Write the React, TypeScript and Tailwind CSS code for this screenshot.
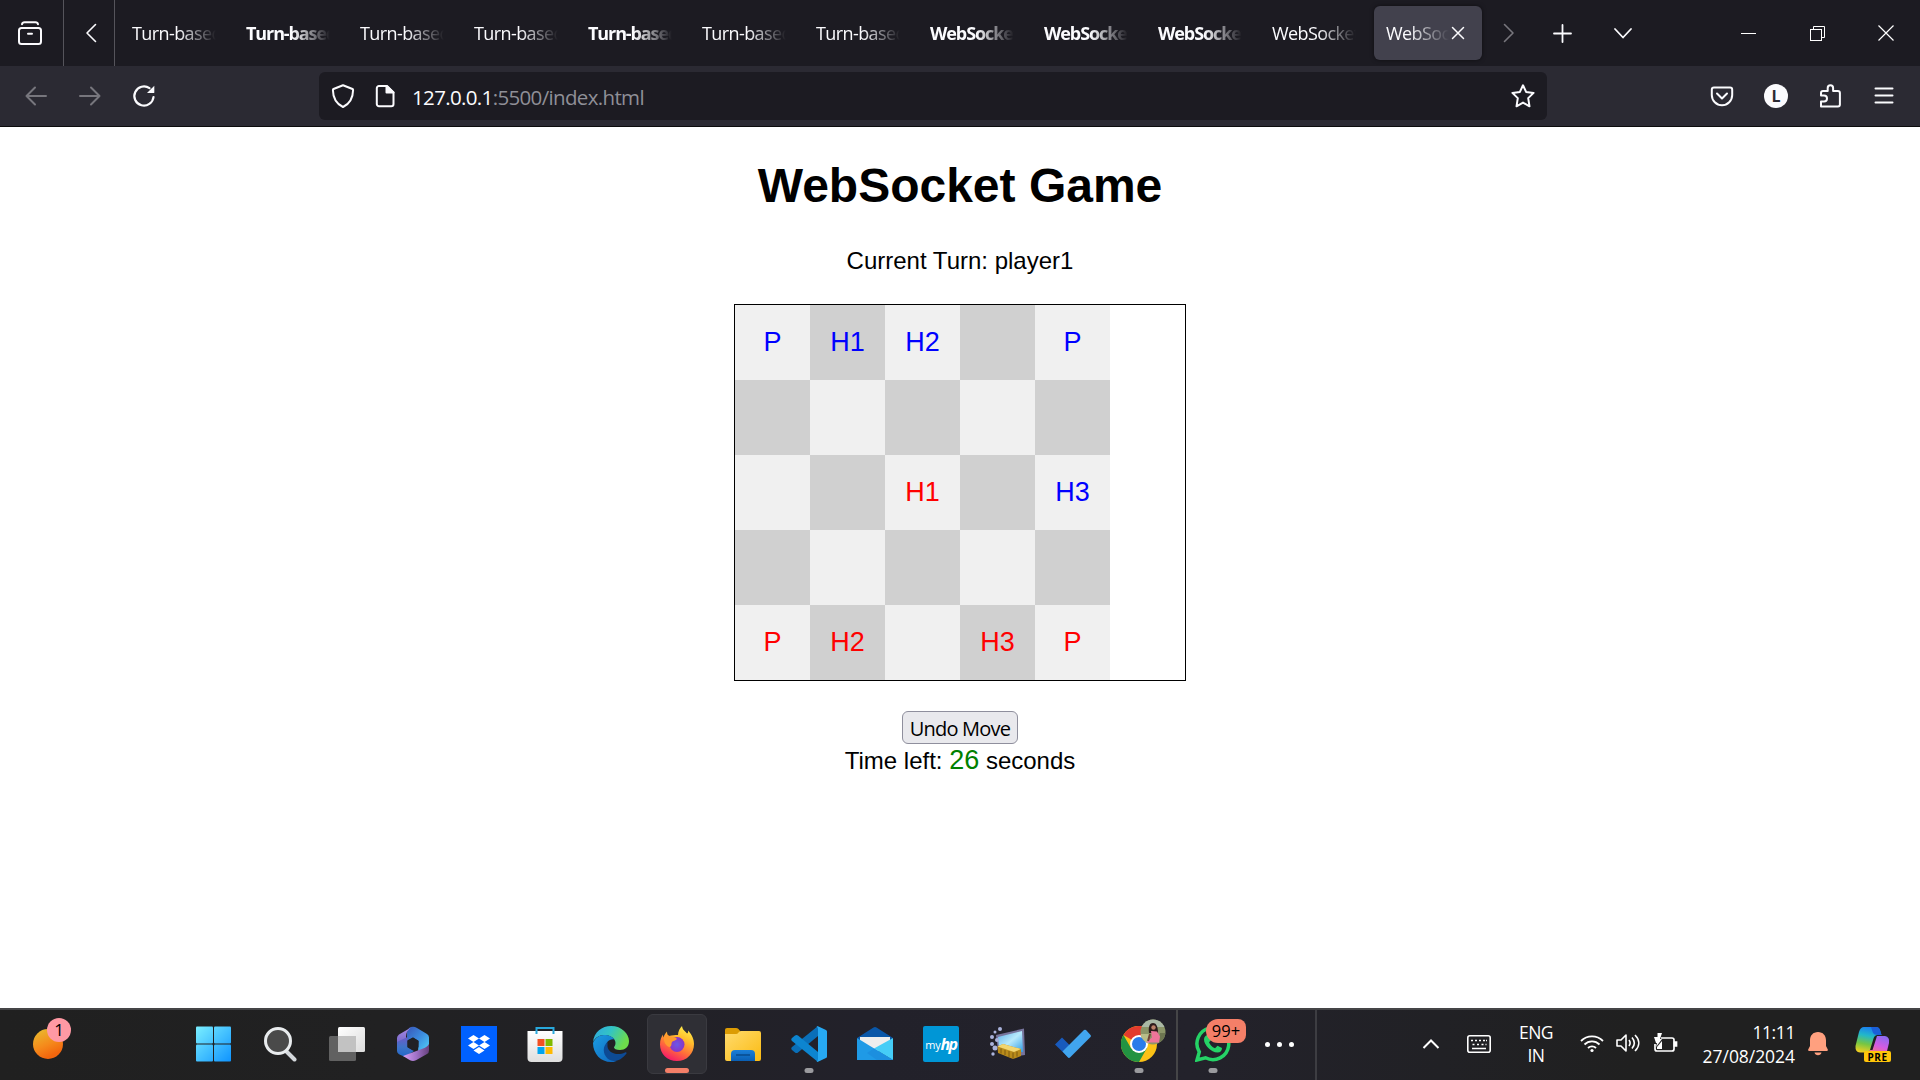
import React from "react";

type P = { children?: React.ReactNode };

const Ic = ({ children, s = 24 }: P & { s?: number }) => (
  <svg width={s} height={s} viewBox="0 0 24 24" fill="none" stroke="#fbfbfe" strokeWidth="2" strokeLinecap="round" strokeLinejoin="round">
    {children}
  </svg>
);

const Box = ({ w, children }: P & { w: string }) => (
  <div className={`${w} flex h-full shrink-0 items-center justify-center`}>{children}</div>
);

const tabs: [string, boolean][] = [
  ["Turn-based", false],
  ["Turn-based", true],
  ["Turn-based", false],
  ["Turn-based", false],
  ["Turn-based", true],
  ["Turn-based", false],
  ["Turn-based", false],
  ["WebSocket", true],
  ["WebSocket", true],
  ["WebSocket", true],
  ["WebSocket", false],
];

function TabBar() {
  return (
    <div className="flex h-[66px] items-center bg-[#1c1b22] text-[18px] tracking-[-0.6px] text-[#fbfbfe]">
      <Box w="w-[63px]">
        <svg className="mr-[3px]" width="24" height="24" viewBox="0 0 24 24" fill="none" stroke="#fbfbfe" strokeWidth="2" strokeLinecap="round">
          <rect x="1" y="7" width="22" height="16" rx="2.500" />
          <path d="M4 3.200C4.300 1.800 5.200 1.200 6.500 1.200h11c1.300 0 2.200.6 2.500 2M10 12.800h4" />
        </svg>
      </Box>
      <div className="h-full w-px bg-[#55545b]" />
      <Box w="w-[50px]">
        <div className="pl-[5px]">
          <Ic><path d="M15.500 3.500 7 12l8.500 8.500" strokeWidth="1.600" /></Ic>
        </div>
      </Box>
      <div className="mr-[2px] h-full w-px bg-[#55545b]" />
      {tabs.map(([t, bold], i) => (
        <div key={i} className="w-[114px] shrink-0 pl-[15px]">
          <div className={`w-[84px] overflow-hidden whitespace-nowrap [mask-image:linear-gradient(to_right,black_55%,transparent_100%)] ${bold ? "font-bold tracking-[-1.1px]" : ""}`}>{t}</div>
        </div>
      ))}
      <div className="mx-[3px] flex h-[54px] w-[108px] shrink-0 items-center rounded-[6px] bg-[#42414d] pl-[12px] shadow-[0_0_4px_rgba(0,0,0,0.5)]">
        <div className="w-[63px] overflow-hidden whitespace-nowrap [mask-image:linear-gradient(to_right,black_35%,transparent_100%)]">WebSocket</div>
        <svg className="ml-[2px]" width="14" height="14" viewBox="0 0 14 14" stroke="#fbfbfe" strokeWidth="1.500" strokeLinecap="round">
          <path d="M1.500 1.500l11 11M12.500 1.500l-11 11" />
        </svg>
      </div>
      <Box w="w-[48px]">
        <div className="pr-[2px]">
          <Ic><path d="M8.500 3.500 17 12l-8.500 8.500" stroke="#77767d" strokeWidth="1.600" /></Ic>
        </div>
      </Box>
      <Box w="w-[58px]">
        <Ic><path d="M12.500 4v17M4 12.500h17" strokeWidth="1.800" /></Ic>
      </Box>
      <Box w="w-[64px]">
        <Ic><path d="M4 8l8 8.500L20 8" strokeWidth="1.800" /></Ic>
      </Box>
      <div className="flex-1" />
      <Box w="w-[69px]"><div className="h-px w-[15px] bg-white" /></Box>
      <Box w="w-[69px]">
        <svg width="15" height="15" viewBox="0 0 15 15" fill="none" stroke="#fff">
          <rect x=".5" y="3.500" width="11" height="11" />
          <path d="M3.500 3.500v-3h11v11h-3" />
        </svg>
      </Box>
      <Box w="w-[68px]">
        <svg width="16" height="16" viewBox="0 0 16 16" stroke="#fff" strokeWidth="1.200"><path d="M.5.5l15 15M15.500.5l-15 15" /></svg>
      </Box>
    </div>
  );
}

function Toolbar() {
  return (
    <div className="flex h-[61px] items-center border-b border-[#0c0c0d] bg-[#2b2a33] px-[9px]">
      <Box w="w-[54px]"><Ic><path d="M22 12H2.500M11 3.500 2.500 12l8.500 8.500" stroke="#77767d" /></Ic></Box>
      <Box w="w-[54px]"><Ic><path d="M2 12h19.500M13 3.500l8.500 8.500-8.500 8.500" stroke="#77767d" /></Ic></Box>
      <Box w="w-[54px]">
        <Ic>
          <path d="M21.500 13A9.600 9.600 0 1 1 17.500 4.200" strokeWidth="2.200" />
          <path d="M22.300 1.800V8.500a.6.6 0 0 1-.6.6H15z" fill="#fbfbfe" stroke="none" />
        </Ic>
      </Box>
      <div className="ml-[148px] flex h-[48px] w-[1228px] items-center rounded-[6px] bg-[#1c1b22]">
        <Box w="w-[48px]">
          <Ic><path d="M12 1.200 21.500 5c.4.200.6.500.6.900C22 13.500 19 19.500 12 23 5 19.500 2 13.500 1.900 5.900c0-.4.200-.7.600-.9z" /></Ic>
        </Box>
        <Box w="w-[36px]">
          <Ic>
            <path d="M6 2h8l6.500 6.500V20a2.200 2.200 0 0 1-2.200 2.200H6A2.200 2.200 0 0 1 3.800 20V4.200A2.200 2.200 0 0 1 6 2z" />
            <path d="M13.500 2v6.500h7z" fill="#fbfbfe" />
          </Ic>
        </Box>
        <div className="flex-1 pl-[9px] pt-[2px] text-[20.500px] tracking-[-0.650px] text-[#8f8f97]">
          <span className="text-[#fbfbfe]">127.0.0.1</span>:5500/index.html
        </div>
        <Box w="w-[48px]">
          <Ic><path d="M12 1.300l3.100 6.600 7.500 1-5.400 5.200 1.300 8.200-6.500-3.700-6.500 3.700 1.300-8.200L1.400 8.900l7.500-1z" /></Ic>
        </Box>
      </div>
      <div className="flex-1" />
      <Box w="w-[54px]">
        <Ic><path d="M4 3.500h16a2.200 2.200 0 0 1 2.200 2.200V11a10.200 10.200 0 0 1-20.400 0V5.700A2.200 2.200 0 0 1 4 3.500zM7 9.500l5 5 5-5" /></Ic>
      </Box>
      <Box w="w-[54px]">
        <div className="flex h-6 w-6 items-center justify-center rounded-full bg-[#fbfbfe] text-[16px] font-bold text-[#2b2a33]">L</div>
      </Box>
      <Box w="w-[54px]">
        <Ic>
          <path d="M3 22.500V17.500H6a3 3 0 0 0 0-6H3V9a2 2 0 0 1 2-2H9.700V4a2.700 2.700 0 0 1 5.400 0v3h4.800a2 2 0 0 1 2 2v11.500a2 2 0 0 1-2 2z" />
        </Ic>
      </Box>
      <Box w="w-[54px]"><Ic><path d="M3.500 4.500h17M3.500 11.500h17M3.500 18.500h17" /></Ic></Box>
    </div>
  );
}

const board = [
  ["bP", "bH1", "bH2", "", "bP"],
  ["", "", "", "", ""],
  ["", "", "rH1", "", "bH3"],
  ["", "", "", "", ""],
  ["rP", "rH2", "", "rH3", "rP"],
];

function Game() {
  return (
    <div className="flex h-[881px] flex-col items-center bg-white font-['Liberation_Sans',Arial,sans-serif] text-[24px] leading-[28px] text-black">
      <h1 className="mt-[32px] text-[48px] font-bold leading-[54px]">WebSocket Game</h1>
      <p className="mt-[34px]">Current Turn: player1</p>
      <div className="mt-[29px] w-[452px] border border-black">
        {board.map((row, r) => (
          <div key={r} className="flex h-[75px]">
            {row.map((c, i) => (
              <div
                key={i}
                className={`flex w-[75px] items-center justify-center pb-px text-[27px] ${(r + i) % 2 ? "bg-[#d0d0d0]" : "bg-[#f0f0f0]"} ${c[0] === "b" ? "text-[#0000ff]" : "text-[#ff0000]"}`}
              >
                {c.slice(1)}
              </div>
            ))}
          </div>
        ))}
      </div>
      <button className="mt-[30px] flex h-[33px] w-[116px] items-center justify-center whitespace-nowrap rounded-[6px] border border-[#8f8f9d] bg-[#e9e9ed] pt-[2px] font-['Open_Sans',sans-serif] text-[20px] tracking-[-0.8px]">
        Undo Move
      </button>
      <div className="mt-[2px] whitespace-pre">
        Time left: <span className="text-[27px] text-[#008000]">26</span> seconds
      </div>
    </div>
  );
}

const App36 = ({ children }: P) => (
  <svg width="36" height="36" viewBox="0 0 36 36">{children}</svg>
);

const Slot = ({ children, dot, active }: P & { dot?: boolean; active?: boolean }) => (
  <div className={`relative flex h-[60px] shrink-0 items-center justify-center ${active ? "mx-[3px] w-[60px] rounded-[6px] border border-[#3a3a40] bg-[#2f2f35]" : "w-[66px]"}`}>
    {children}
    {dot && <div className="absolute bottom-[1px] left-1/2 h-[5px] w-[9px] -translate-x-1/2 rounded-full bg-[#9a9a9e]" />}
    {active && <div className="absolute bottom-0 left-1/2 h-[5px] w-[24px] -translate-x-1/2 rounded-full bg-[#f47f68]" />}
  </div>
);

const G = ({ id, c, v = "0 0 1 1" }: { id: string; c: string[]; v?: string }) => {
  const [x1, y1, x2, y2] = v.split(" ");
  return (
    <linearGradient id={id} x1={x1} y1={y1} x2={x2} y2={y2}>
      {c.map((k, i) => <stop key={i} offset={i / (c.length - 1)} stopColor={k} />)}
    </linearGradient>
  );
};

function Taskbar() {
  return (
    <div className="flex h-[72px] items-center border-t-2 border-[#454547] bg-[linear-gradient(90deg,#202020_0%,#212122_20%,#22212a_45%,#23222b_62%,#212125_75%,#202020_85%)] text-[17.5px] text-white">
      <div className="relative mb-[2px] h-[60px] w-[180px] shrink-0">
        <div className="absolute left-[33px] top-[15px] h-[30px] w-[30px] rounded-full bg-[linear-gradient(155deg,#eab52c_10%,#f58a1b_50%,#f2660d_80%)]" />
        <div className="absolute left-[47px] top-[4px] flex h-[24px] w-[24px] items-center justify-center rounded-full bg-[#ff99a4] text-[17px] text-black">1</div>
      </div>
      <div className="mb-[2px] flex items-center">
        <Slot>
          <App36>
            <defs><linearGradient id="win" gradientUnits="userSpaceOnUse" x1="0" y1="0" x2="36" y2="36"><stop stopColor="#7df1ff" /><stop offset="1" stopColor="#0e93ff" /></linearGradient></defs>
            <g fill="url(#win)"><rect x="1" y=".5" width="17" height="17" rx="1" /><rect x="19" y=".5" width="17" height="17" rx="1" /><rect x="1" y="18.500" width="17" height="17" rx="1" /><rect x="19" y="18.500" width="17" height="17" rx="1" /></g>
          </App36>
        </Slot>
        <Slot>
          <App36>
            <path d="M25 25l8.500 8.500" stroke="#d4d8dc" strokeWidth="4" strokeLinecap="round" />
            <circle cx="17" cy="15" r="12.500" fill="#4a4a4a" stroke="#e9ecee" strokeWidth="3" />
          </App36>
        </Slot>
        <div className="w-[2px]" />
        <Slot>
          <App36>
            <defs><G id="tv" c={["#ffffff", "#dcdcdc"]} /></defs>
            <rect x="9" y="1" width="27" height="25" rx="1.500" fill="url(#tv)" />
            <rect x="0" y="10" width="27" height="25" rx="1.500" fill="#777" fillOpacity=".75" />
            <path d="M9 10h18v16H9z" fill="#c2c2c2" />
          </App36>
        </Slot>
        <Slot>
          <App36>
            <defs><G id="m1" c={["#6c5ac8", "#3f74c9", "#2168c8"]} v="0 0 0 1" /><G id="m2" c={["#3856b8", "#3c8de0", "#55d5fa"]} /><G id="m3" c={["#d9a1f4", "#a273c9", "#66407c"]} v="0 0 1 0" /><G id="m4" c={["#a98ae6", "#5a55b8"]} v="0 0 0 1" /></defs>
            <path d="M14 2q4-2.500 8 0l10 6q2 1.300 2 3.500V22q0 2-2 3l-9 2 .5-12-5.500-3.500-6 3V6z" fill="url(#m2)" />
            <path d="M16 1.500 4 8.500Q2 10 2 12v13l9-4V11q0-6 5-9.500z" fill="url(#m4)" />
            <path d="M2 16v9q0 2 2 3.200L10 31l9-6-6.500-4V11L6 14z" fill="url(#m1)" />
            <path d="M8 30l7 4.300q3 1.500 6 0l11-6.300q2-1 2-3.500V18q-1 2-4 3.800z" fill="url(#m3)" />
            <path d="M18 11.500l5.500 3.200v6.600L18 24.500l-5.500-3.200v-6.600z" fill="#212125" />
          </App36>
        </Slot>
        <Slot>
          <App36>
            <rect width="36" height="36" fill="#0061ff" />
            <path d="M12.500 9l5.500 3.500-5.500 3.500L7 12.500zM23.500 9l5.500 3.500-5.500 3.500-5.500-3.500zM12.500 16l5.500 3.500-5.500 3.500L7 19.500zM23.500 16l5.500 3.500-5.500 3.500-5.500-3.500zM18 21l5.500 3.500L18 28l-5.500-3.500z" fill="#fff" />
          </App36>
        </Slot>
        <Slot>
          <App36>
            <defs><G id="st" c={["#ffffff", "#dedede"]} v="0 0 0 1" /></defs>
            <path d="M.5 5h35v27a4 4 0 0 1-4 4h-27a4 4 0 0 1-4-4z" fill="url(#st)" />
            <path d="M9.500 8V2h17v6" fill="none" stroke="#28a8dc" strokeWidth="2" />
            <path d="M10.500 13h7v7h-7z" fill="#f25022" /><path d="M18.500 13h7v7h-7z" fill="#7fba00" /><path d="M10.500 21h7v7h-7z" fill="#00a4ef" /><path d="M18.500 21h7v7h-7z" fill="#ffb900" />
          </App36>
        </Slot>
        <Slot>
          <App36>
            <defs><G id="e1" c={["#2ea6e4", "#33c4c4", "#6ddc4b"]} v="0 0 1 .4" /><G id="e2" c={["#1b9de2", "#0f66bd"]} v="0 0 1 1" /></defs>
            <path d="M0 16C1 6 9 0 18 0c11 0 18 8 18 15 0 6-4 9-9 9-4 0-6-1.500-6-2.500 0-1 1.500-1.500 1.500-4.500C22.500 12 17 9 11 9 6 9 2 12 0 16z" fill="url(#e1)" />
            <path d="M0 17c2-5 6-8 11-8 5 0 9 2 10.500 4.500C16 12.500 12.500 17 12.500 22c0 7 5 12 11 13-2 1-4 1-5.500 1C8 36 0 28 0 17z" fill="url(#e2)" />
            <path d="M14.500 16c-5 4-5 12 0 16.500 5 4.500 13 3 19-5 .5-1-.5-1.500-1.500-1-8 4-17 0-17.500-6z" fill="#0d4a94" />
          </App36>
        </Slot>
        <Slot active>
          <App36>
            <defs><G id="f1" c={["#fff34f", "#ffbe2c", "#ff6c3a", "#f5156c"]} v=".8 0 .3 1" /><radialGradient id="f2"><stop stopColor="#6a58e8" /><stop offset="1" stopColor="#8a35c5" /></radialGradient></defs>
            <path d="M19 9c0-4 2-7 4-9 .5 4 3 5 5 7.500 1.500-.5 1 -2 1-3C33.500 9 35 14 35 18c0 9.500-7 17-17 17S1 27.500 1 18.500c0-5 1.500-8 3-10 0 0 0 2 .5 3 1-3 2-4.500 3.500-6 0 2 .5 3.500 2 4.500C13 9 16 9 19 9z" fill="url(#f1)" />
            <circle cx="18" cy="18.500" r="7.500" fill="url(#f2)" />
            <path d="M5 10c3-1 6-.5 8 1.500 2-.5 4 0 5 1.500-1.500 2-4 1.500-5 3-1 2 0 4-2 5-4 0-7-6-6-11z" fill="#ff9a2e" />
          </App36>
        </Slot>
        <Slot>
          <App36>
            <defs><G id="fo" c={["#ffdb6e", "#fbbb12"]} /><G id="fb" c={["#1a7fd8", "#0a5fb4"]} v="0 0 0 1" /></defs>
            <path d="M0 4q0-2 2-2h9q1.500 0 2.500 1L16 6l-4 4H0z" fill="#dc9c04" />
            <path d="M0 8h11q1.500 0 2.500-1.500T16 5h18q2 0 2 2v26q0 2-2 2H2q-2 0-2-2z" fill="url(#fo)" />
            <path d="M6 35V28q0-4 4-4h16q4 0 4 4v7z" fill="url(#fb)" /><path d="M11 29h14" stroke="#084b8c" strokeWidth="1.500" />
          </App36>
        </Slot>
        <Slot dot>
          <App36>
            <path d="M27 0v10L7 26.500q-1.500 1-3 0L1 24q-1.500-1.500 0-3z" fill="#0a6fb8" />
            <path d="M27 36V26L7 9.500q-1.500-1-3 0L1 12q-1.500 1.500 0 3z" fill="#0d85d0" />
            <path d="M25.500.5q1-.7 2 0L35 4q1 .5 1 1.500v25q0 1-1 1.500l-7.500 3.500q-1 .5-2 0Q27 35 27 33V3q0-2-1.500-2.500z" fill="#27a9f2" />
          </App36>
        </Slot>
        <Slot>
          <App36>
            <path d="M0 12 16.500 1.500q1.500-1 3 0L36 12 18 24z" fill="#0a57a8" />
            <path d="M3 11h30v8L18 27 3 17z" fill="#eeeeee" />
            <path d="M0 12l36 22H0z" fill="#1f9ae6" /><path d="M36 12v22L17 22.500z" fill="#45cdf7" /><path d="M17 22.500 36 34H20L10 27z" fill="#1c8fdf" />
          </App36>
        </Slot>
        <Slot>
          <div className="flex h-9 w-9 items-center justify-center rounded-[2px] bg-[#0096d6] text-[11px] leading-none tracking-[-0.3px] text-white">
            <span>my</span><span className="text-[16px] font-bold italic tracking-[-1.5px]">hp</span>
          </div>
        </Slot>
        <Slot>
          <App36>
            <defs><G id="pc" c={["#5fb0ea", "#b8e9fb", "#2f9de6"]} /></defs>
            <path d="M7 9 35 2.500 36 29 22 31 9 24z" fill="#77749c" />
            <path d="M9 11 33 5 34 26l-14-1-10-3z" fill="url(#pc)" />
            <g fill="#aab3dc"><circle cx="3" cy="11" r="2" /><circle cx="11" cy="3" r="2" /><circle cx="6" cy="6" r="1.500" /><circle cx="3" cy="18" r="2" /><circle cx="6" cy="22" r="2.500" /><circle cx="4" cy="28" r="1.700" /><circle cx="8" cy="14" r="2" /></g>
            <path d="M8.500 20.500 14 18l18 5v7l-8 3-15-6z" fill="#b98b1b" /><path d="M8.500 20.500 14 18l18 5-7 3z" fill="#f2d670" />
            <path d="M12 22.500v5M16 24v5M20 25v6M24 26.500v6M28 25.500v5" stroke="#7d5a10" />
          </App36>
        </Slot>
        <Slot>
          <App36>
            <path d="M0 18.500 7 11.500 16.500 21 14 32z" fill="#185abd" />
            <path d="M7.500 25.500 29 4q1-.7 2 0l4.500 5q.8 1 0 2L15 31.500q-1 .8-2 0z" fill="#41a5ee" />
          </App36>
        </Slot>
        <Slot dot>
          <App36>
            <circle cx="18" cy="18" r="18" fill="#fbc116" />
            <path d="M18 18 2.400 9A18 18 0 0 1 33.600 9z" fill="#e33b2e" />
            <path d="M2.400 9A18 18 0 0 0 18 36l8-14H18L10.200 22.500z" fill="#229342" />
            <circle cx="18" cy="18" r="9" fill="#fff" /><circle cx="18" cy="18" r="7" fill="#2a7bea" />
          </App36>
          <svg className="absolute left-[34px] top-[5px]" width="26" height="26" viewBox="0 0 26 26">
            <defs><clipPath id="av"><circle cx="13" cy="13" r="12.500" /></clipPath></defs>
            <g clipPath="url(#av)">
              <path d="M0 0h26v26H0z" fill="#8b9568" /><path d="M0 0h26v8H0z" fill="#aab8a5" /><path d="M0 15h9v11H0z" fill="#b8bd88" /><path d="M20 14h6v9h-7z" fill="#6c7550" />
              <path d="M9 14c-1-7 1-10 4-10s5 3 5 10z" fill="#2d1b1b" /><circle cx="13.500" cy="8.500" r="2.200" fill="#bd8068" />
              <path d="M11 12l6 .5 3 5-1 6H6l6-5z" fill="#ee7599" /><path d="M10 15l-2 7" stroke="#704434" strokeWidth="2" />
            </g>
          </svg>
        </Slot>
      </div>
      <div className="ml-[4px] h-full w-[2px] shrink-0 bg-[#454547]" />
      <div className="mb-[2px] ml-[2px] flex items-center">
        <Slot dot>
          <App36>
            <path d="M2 34 4.300 26A15.900 15.900 0 1 1 10.500 31.800z" fill="none" stroke="#25d366" strokeWidth="3.500" />
            <path d="M12.500 9c-2 .3-3.500 2-3.500 4.500C9 19 16 26.500 22.500 26.500c3 0 4.500-2 4.500-4.500l-4.500-2.300-2.500 2.500c-3-1.200-5-3.500-6-6l2-2z" fill="#25d366" />
          </App36>
          <div className="absolute left-[26px] top-[5px] flex h-[24px] w-[40px] items-center justify-center rounded-l-[12px] rounded-r-[8px] bg-[#f47f68] text-[16.500px] text-black">99+</div>
        </Slot>
        <Slot>
          <div className="flex gap-[7px]"><i className="h-[5px] w-[5px] rounded-full bg-white" /><i className="h-[5px] w-[5px] rounded-full bg-white" /><i className="h-[5px] w-[5px] rounded-full bg-white" /></div>
        </Slot>
      </div>
      <div className="ml-[3px] h-full w-[2px] shrink-0 bg-[#3d3d42]" />
      <div className="flex-1" />
      <div className="mb-[2px] flex h-[60px] items-center">
        <Box w="w-[36px]">
          <svg width="18" height="12" viewBox="0 0 18 12" fill="none" stroke="#fff" strokeWidth="2"><path d="M1.500 10 9 2.500l7.500 7.500" /></svg>
        </Box>
        <Box w="w-[60px]">
          <svg width="24" height="18" viewBox="0 0 24 18" fill="none" stroke="#fff" strokeWidth="1.600">
            <rect x=".8" y=".8" width="22.400" height="16.400" rx="2" />
            <path d="M4 5.500h2M8 5.500h2M12 5.500h2M16 5.500h2M5.500 9.500h2M10 9.500h2M14.500 9.500h2M5 13.500h14M19 5.500h1M18.500 9.500h1" />
          </svg>
        </Box>
        <div className="flex w-[54px] flex-col items-center text-[17.500px] leading-[23px] tracking-[-0.5px]"><span>ENG</span><span>IN</span></div>
        <div className="flex w-[120px] justify-center gap-[12px] pl-[12px]">
          <svg width="24" height="20" viewBox="0 0 24 20" fill="none" stroke="#fff" strokeWidth="1.800">
            <path d="M1 8a15.600 15.600 0 0 1 22 0M4.500 11.500a10.600 10.600 0 0 1 15 0M8 15a5.700 5.700 0 0 1 8 0" /><circle cx="12" cy="17.500" r="1.600" fill="#fff" stroke="none" />
          </svg>
          <svg width="25" height="20" viewBox="0 0 25 20" fill="none" stroke="#fff" strokeWidth="1.600" strokeLinejoin="round">
            <path d="M1 7h4l5-5v16l-5-5H1zM13 7c1.500 2 1.500 4 0 6M16 4.500c3 3.500 3 7.500 0 11M19 2c5 5 5 11 0 16" />
          </svg>
          <svg width="25" height="22" viewBox="0 0 25 22" fill="none" stroke="#fff" strokeWidth="1.700">
            <path d="M8 5h11q2 0 2 2v9q0 2-2 2H4q-2 0-2-2v-5" /><path d="M21.500 9h2v4h-2z" fill="#fff" />
            <path d="M4.500 0v4H1l2 6h1l-1 4 6-8H7l2-6z" fill="#fff" stroke="none" /><path d="M4 16V14L9 8v8z" fill="#fff" stroke="none" />
          </svg>
        </div>
        <div className="flex w-[112px] flex-col items-end pb-[1px] text-[17.500px] leading-[24px] tracking-[-0.050px]"><span className="tracking-[-0.4px]">11:11</span><span>27/08/2024</span></div>
        <Box w="w-[46px]">
          <svg width="20" height="24" viewBox="0 0 20 24" fill="#ffa07f"><path d="M10 0c5 0 8 3.500 8 8.500V14l1.800 3.500q.4 1.500-1 1.500H1.200q-1.400 0-1-1.500L2 14V8.500C2 3.500 5 0 10 0zM6.500 20.500h7a3.600 3.600 0 0 1-7 0z" /></svg>
        </Box>
        <div className="relative ml-[14px] mr-[29px] h-[36px] w-[36px]">
          <App36>
            <defs><G id="c1" c={["#1b7ef0", "#22b8c9", "#76c643", "#f2cf20"]} v=".5 0 .3 1" /><G id="c2" c={["#8a6bf2", "#d45be2", "#ff7a63"]} v=".8 0 .3 1" /></defs>
            <path d="M9 1h12q3 0 4 3l1.500 5h-4q-3 0-4 3.500L15 24q-1 2.500-4 2.500H5Q0 26 .5 20L4 6q1.500-5 5-5z" fill="url(#c1)" />
            <path d="M16 1h5q3 0 4 3l1.500 5h-4Q19 9 18 7z" fill="#1b5fd8" />
            <path d="M22 10h8q5 1 4 7l-2 8q-1 4-5 4H9q4-1 5.500-5h3z" fill="url(#c2)" />
          </App36>
          <div className="absolute left-[9px] top-[25px] flex h-[11px] w-[27px] items-center justify-center rounded-[2px] bg-[#ffc60a] text-[10px] font-bold leading-none tracking-[0.500px] text-black">PRE</div>
        </div>
      </div>
    </div>
  );
}

export default function App() {
  return (
    <div className="h-[1080px] w-[1920px] overflow-hidden bg-white font-['Open_Sans',sans-serif]">
      <TabBar />
      <Toolbar />
      <Game />
      <Taskbar />
    </div>
  );
}
